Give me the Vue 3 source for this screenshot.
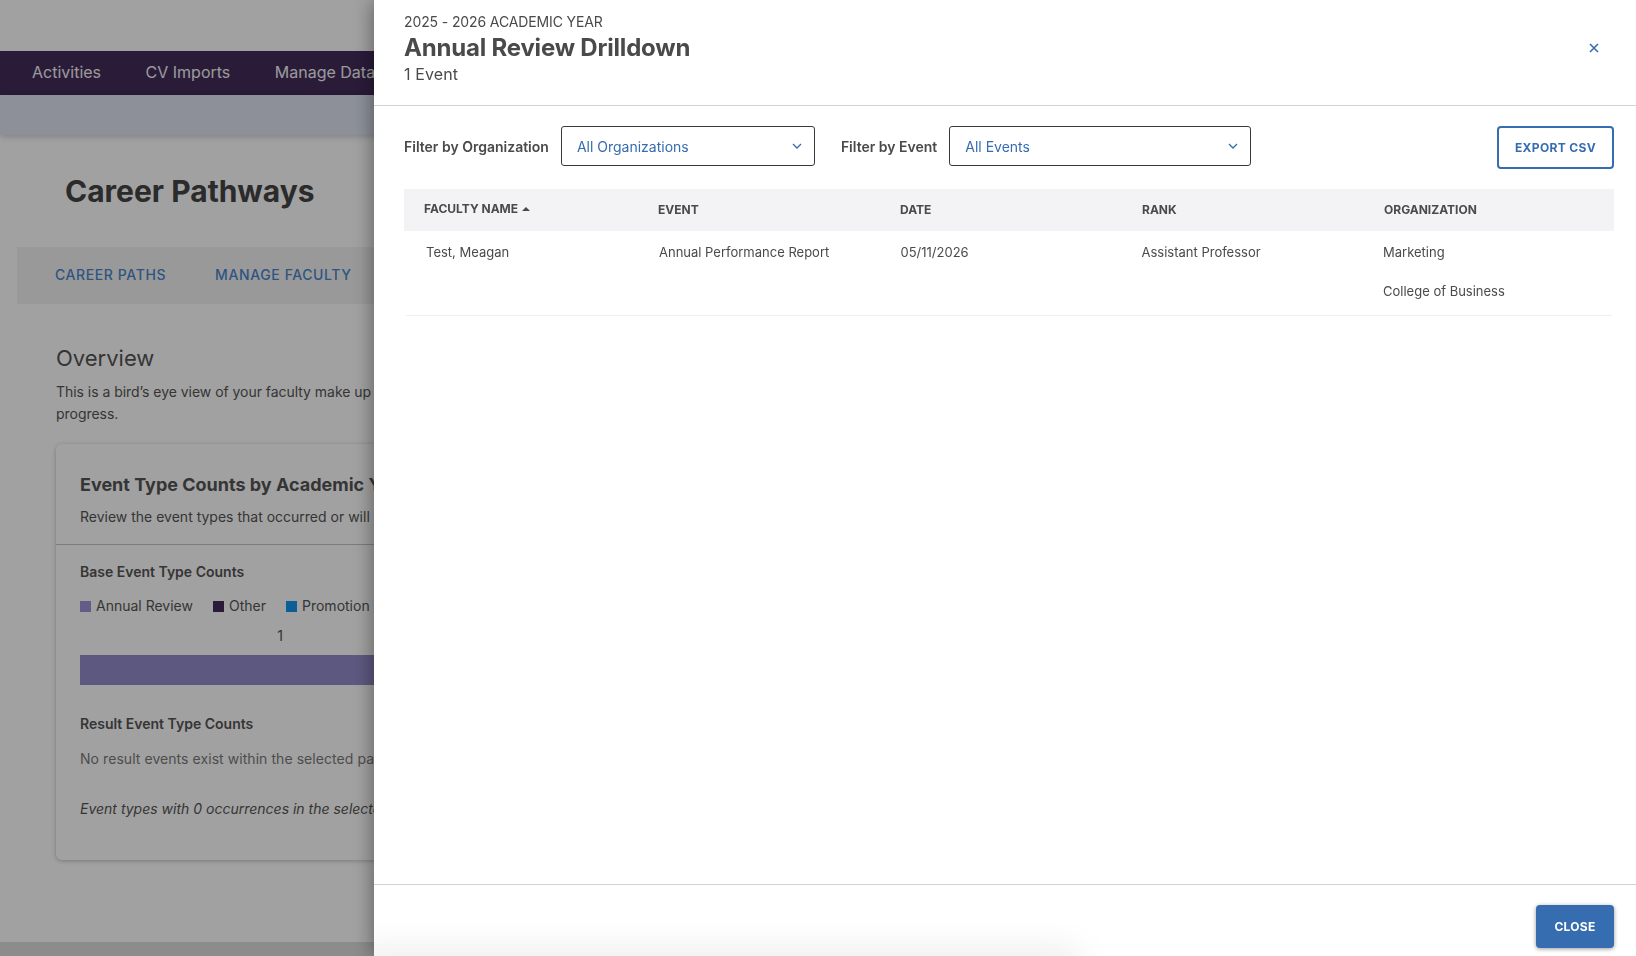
<script setup>
const columns = ['Event', 'Date', 'Rank', 'Organization']

const legend = [
  { label: 'Annual Review', color: '#9a94d8' },
  { label: 'Other', color: '#432b5a' },
  { label: 'Promotion', color: '#1199ee' },
]

const row = {
  name: 'Test, Meagan',
  event: 'Annual Performance Report',
  date: '05/11/2026',
  rank: 'Assistant Professor',
  orgs: ['Marketing', 'College of Business'],
}
</script>

<template>
  <div class="page">
    <div class="topbar"></div>
    <nav class="nav">
      <a>Activities</a>
      <a>CV Imports</a>
      <a>Manage Data</a>
    </nav>
    <div class="band"></div>

    <main class="content">
      <h1 class="page-title">Career Pathways</h1>
      <div class="tabs">
        <a>Career Paths</a>
        <a>Manage Faculty</a>
      </div>

      <section class="overview">
        <h2>Overview</h2>
        <p>This is a bird’s eye view of your faculty make up<br />progress.</p>

        <div class="card">
          <div class="card-head">
            <h3>Event Type Counts by Academic Year</h3>
            <p>Review the event types that occurred or will occur</p>
          </div>
          <div class="card-body">
            <h4>Base Event Type Counts</h4>
            <ul class="legend">
              <li v-for="item in legend" :key="item.label">
                <span class="swatch" :style="{ background: item.color }"></span>{{ item.label }}
              </li>
            </ul>
            <div class="bar-count">1</div>
            <div class="bar"></div>
            <h4 class="result-title">Result Event Type Counts</h4>
            <p class="muted">No result events exist within the selected pathway</p>
            <p class="note">Event types with 0 occurrences in the selected</p>
          </div>
        </div>
      </section>
    </main>

    <footer class="page-footer"></footer>
  </div>

  <div class="overlay"></div>

  <aside class="drawer">
    <header class="drawer-head">
      <div>
        <div class="eyebrow">2025 - 2026 ACADEMIC YEAR</div>
        <h2 class="drawer-title">Annual Review Drilldown</h2>
        <div class="count">1 Event</div>
      </div>
      <button class="icon-close" aria-label="Close">
        <svg width="10" height="10" viewBox="0 0 10 10">
          <path d="M1 1l8 8M9 1l-8 8" stroke="#366cb0" stroke-width="1.6" fill="none" />
        </svg>
      </button>
    </header>

    <div class="drawer-body">
      <div class="filters">
        <label class="filter-label">Filter by Organization</label>
        <div class="select select-org">
          <span>All Organizations</span>
          <svg width="10" height="6" viewBox="0 0 10 6">
            <path d="M1 1l4 4 4-4" stroke="#366cb0" stroke-width="1.3" fill="none" />
          </svg>
        </div>
        <label class="filter-label filter-event">Filter by Event</label>
        <div class="select select-event">
          <span>All Events</span>
          <svg width="10" height="6" viewBox="0 0 10 6">
            <path d="M1 1l4 4 4-4" stroke="#366cb0" stroke-width="1.3" fill="none" />
          </svg>
        </div>
        <button class="btn-export">EXPORT CSV</button>
      </div>

      <div class="thead">
        <div class="th th-sorted">FACULTY NAME<span class="sort-arrow"></span></div>
        <div v-for="col in columns" :key="col" class="th">{{ col.toUpperCase() }}</div>
      </div>
      <div class="tbody-row">
        <div>{{ row.name }}</div>
        <div>{{ row.event }}</div>
        <div>{{ row.date }}</div>
        <div>{{ row.rank }}</div>
        <div class="orgs">
          <div v-for="org in row.orgs" :key="org">{{ org }}</div>
        </div>
      </div>
    </div>

    <footer class="drawer-foot">
      <div class="foot-shade"></div>
      <button class="btn-close">CLOSE</button>
    </footer>
  </aside>
</template>

<style>
html,
body {
  margin: 0;
  overflow: hidden;
}
</style>

<style scoped>
* {
  box-sizing: border-box;
}

.page {
  height: 956px;
  width: 1636px;
  overflow: hidden;
  display: flex;
  flex-direction: column;
  background: #fff;
  font-family: Inter, 'Liberation Sans', sans-serif;
  font-size: 14px;
  color: #555;
}

.topbar {
  height: 51px;
}

.nav {
  height: 44px;
  background: #432b5a;
  display: flex;
  align-items: center;
  gap: 44.5px;
  padding: 0 0 2px 32px;
  font-size: 16px;
  color: #f4f4f4;
  white-space: nowrap;
}

.band {
  height: 40px;
  background: #dfe5f3;
  box-shadow: 0 2px 6px rgba(0, 0, 0, 0.18);
}

.content {
  flex: 1;
  padding-left: 17px;
}

.page-title {
  margin: 35px 0 0 48px;
  font-size: 30px;
  line-height: 42px;
  font-weight: 700;
  color: #444;
}

.tabs {
  margin-top: 35px;
  height: 57px;
  width: 1600px;
  background: #f3f3f3;
  display: flex;
  align-items: center;
  gap: 49px;
  padding: 0 0 2px 38px;
  font-size: 14px;
  font-weight: 500;
  letter-spacing: 0.6px;
  text-transform: uppercase;
  color: #4a86cc;
}

.overview {
  padding-left: 39px;
}

.overview h2 {
  margin: 38px 0 0;
  font-size: 22px;
  line-height: 32px;
  font-weight: 400;
  color: #555;
}

.overview > p {
  margin: 7px 0 0;
  line-height: 22px;
  letter-spacing: -0.04px;
  color: #555;
}

.card {
  margin-top: 19px;
  width: 1500px;
  height: 416px;
  border-radius: 6px;
  background: #fff;
  box-shadow: 0 1px 4px rgba(0, 0, 0, 0.25);
}

.card-head {
  height: 101px;
  padding: 28px 24px 0;
  border-bottom: 1px solid #c4c4c4;
}

.card-head h3 {
  margin: 0;
  font-size: 18px;
  line-height: 26px;
  font-weight: 700;
  color: #555;
}

.card-head p {
  margin: 9px 0 0;
  line-height: 20px;
}

.card-body {
  padding: 17px 24px 0;
}

.card-body h4 {
  margin: 0;
  font-size: 14px;
  line-height: 20px;
  font-weight: 600;
  color: #555;
}

.legend {
  list-style: none;
  margin: 14px 0 0;
  padding: 0;
  display: flex;
  gap: 20px;
  line-height: 20px;
}

.legend li {
  display: flex;
  align-items: center;
}

.swatch {
  width: 11px;
  height: 11px;
  margin-right: 5px;
}

.bar-count {
  margin-top: 10px;
  width: 400px;
  text-align: center;
  line-height: 20px;
}

.bar {
  margin-top: 9px;
  height: 30px;
  background: #948cca;
}

.card-body .result-title {
  margin-top: 29px;
}

.muted {
  margin: 15px 0 0;
  line-height: 20px;
  letter-spacing: 0.06px;
  color: #7a7a7a;
}

.note {
  margin: 30px 0 0;
  line-height: 20px;
  font-style: italic;
}

.page-footer {
  height: 14px;
  background: #dedede;
}

.overlay {
  position: fixed;
  inset: 0;
  background: rgba(0, 0, 0, 0.37);
}

.drawer {
  position: fixed;
  top: 0;
  right: 0;
  bottom: 0;
  width: 1262px;
  display: flex;
  flex-direction: column;
  overflow: hidden;
  background: #fff;
  box-shadow: 0 0 20px rgba(0, 0, 0, 0.45);
  font-family: Inter, 'Liberation Sans', sans-serif;
  font-size: 13px;
  color: #4a4a4a;
}

.drawer-head {
  height: 106px;
  flex: none;
  padding: 13px 36px 0 30px;
  display: flex;
  justify-content: space-between;
  border-bottom: 1px solid #d2d2d2;
}

.eyebrow {
  font-size: 14px;
  line-height: 18px;
  letter-spacing: -0.12px;
}

.drawer-title {
  margin: 2px 0 0;
  font-size: 24px;
  line-height: 30px;
  font-weight: 700;
  letter-spacing: -0.2px;
  color: #4a4a4a;
}

.count {
  font-size: 16px;
  line-height: 22px;
  letter-spacing: 0.1px;
}

.icon-close {
  margin-top: 29px;
  width: 12px;
  height: 12px;
  padding: 1px;
  border: 0;
  background: none;
  display: flex;
}

.drawer-body {
  flex: 1;
  padding: 20px 22px 0 30px;
}

.filters {
  display: flex;
  align-items: flex-start;
  height: 63px;
}

.filter-label {
  margin-top: 12px;
  margin-right: 12px;
  font-size: 14px;
  line-height: 18px;
  font-weight: 600;
}

.filter-event {
  margin-left: 26px;
}

.select {
  height: 40px;
  border: 1px solid #3a3a3a;
  border-radius: 3px;
  display: flex;
  align-items: center;
  justify-content: space-between;
  padding: 0 12px 0 15px;
  font-size: 14px;
  color: #366cb0;
}

.select-org {
  width: 254px;
}

.select-event {
  width: 302px;
}

.btn-export {
  margin-left: auto;
  width: 117px;
  height: 43px;
  border: 2px solid #366cb0;
  border-radius: 4px;
  background: #fff;
  font-family: inherit;
  font-size: 12px;
  font-weight: 700;
  letter-spacing: 0.35px;
  color: #366cb0;
}

.thead {
  height: 42px;
  background: #f3f3f5;
  display: grid;
  grid-template-columns: 234px 242px 242px 242px 1fr;
  align-items: center;
  padding: 0 0 2px 20px;
}

.th {
  font-size: 12px;
  font-weight: 700;
}

.th-sorted {
  display: flex;
  align-items: center;
  margin-top: -1px;
}

.sort-arrow {
  margin-left: 4px;
  width: 0;
  height: 0;
  border-left: 4px solid transparent;
  border-right: 4px solid transparent;
  border-bottom: 4px solid #4a4a4a;
}

.tbody-row {
  margin-left: 2px;
  margin-right: 2px;
  height: 85px;
  padding: 11px 0 0 20px;
  display: grid;
  grid-template-columns: 233px 241.5px 241px 241.5px 1fr;
  line-height: 20px;
  border-bottom: 1px solid #eeeeee;
}

.orgs {
  display: flex;
  flex-direction: column;
  gap: 19px;
}

.drawer-foot {
  position: relative;
  flex: none;
  height: 72px;
  border-top: 1px solid #d2d2d2;
  display: flex;
  justify-content: flex-end;
  padding: 20px 22px 0 0;
}

.foot-shade {
  position: absolute;
  left: -20px;
  bottom: -16px;
  width: 725px;
  height: 16px;
  box-shadow: 0 0 36px rgba(0, 0, 0, 0.15);
  background: #ddd;
}

.btn-close {
  position: relative;
  width: 78px;
  height: 43px;
  border: 0;
  border-radius: 4px;
  background: #366cb0;
  box-shadow: 0 1px 4px rgba(0, 0, 0, 0.4);
  font-family: inherit;
  font-size: 12px;
  font-weight: 700;
  letter-spacing: 0.3px;
  color: #fff;
}
</style>
